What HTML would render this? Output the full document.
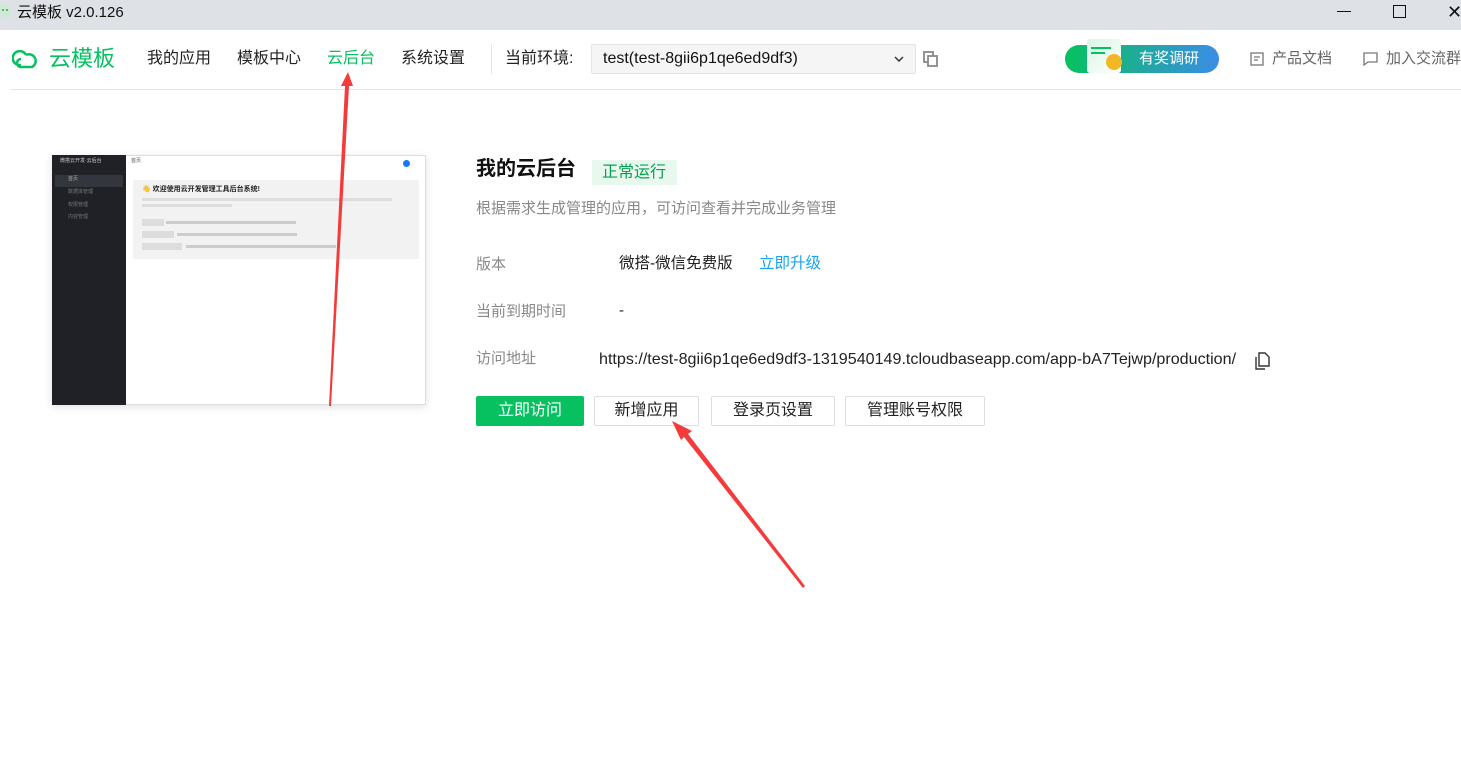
<!DOCTYPE html>
<html><head><meta charset="utf-8"><style>
*{margin:0;padding:0;box-sizing:border-box}
body{width:1461px;height:769px;background:#fff;font-family:"Liberation Sans","Noto Sans CJK SC",sans-serif;position:relative;overflow:hidden;color:#222}
.abs{position:absolute;white-space:nowrap;line-height:1.45}
.tb{position:absolute;left:0;top:0;width:1461px;height:30px;background:#dee1e6}
.nav{font-size:16px;top:47px}
.btn{position:absolute;top:396px;height:30px;border:1px solid #ddd;border-radius:2px;font-size:16px;text-align:center;line-height:28px;color:#222;background:#fff}
.lbl{font-size:15px;color:#888}
</style></head><body>
<div class="tb"></div>
<svg class="abs" style="left:0;top:3px" width="12" height="16"><circle cx="4" cy="8" r="7" fill="#cfe8d8"/><circle cx="3" cy="7" r="1" fill="#3a3"/><circle cx="7" cy="7" r="1" fill="#3a3"/></svg>
<div class="abs" style="left:17px;top:2px;font-size:15px;color:#111">云模板 v2.0.126</div>
<div class="abs" style="left:1337px;top:11px;width:14px;height:1px;background:#111"></div>
<div class="abs" style="left:1393px;top:5px;width:13px;height:13px;border:1px solid #111"></div>
<div class="abs" style="left:1447px;top:-1px;font-size:18px;color:#111">✕</div>

<svg class="abs" style="left:12px;top:47px" width="28" height="24" viewBox="0 0 28 24"><path d="M9 18 A7 7 0 1 1 14 8 M14 8 A6 6 0 1 1 20 20 L9 20 A4 4 0 0 1 9 12" fill="none" stroke="#07c160" stroke-width="2.5"/></svg>
<div class="abs" style="left:49px;top:43px;font-size:22px;color:#07c160">云模板</div>
<div class="abs nav" style="left:147px">我的应用</div>
<div class="abs nav" style="left:237px">模板中心</div>
<div class="abs nav" style="left:327px;color:#07c160">云后台</div>
<div class="abs nav" style="left:401px">系统设置</div>
<div class="abs" style="left:491px;top:44px;width:1px;height:30px;background:#e5e5e5"></div>
<div class="abs nav" style="left:505px">当前环境:</div>
<div class="abs" style="left:591px;top:44px;width:325px;height:30px;background:#f5f5f5;border:1px solid #e3e3e3;border-radius:2px"></div>
<div class="abs" style="left:603px;top:47px;font-size:16px;color:#111">test(test-8gii6p1qe6ed9df3)</div>
<svg class="abs" style="left:893px;top:54px" width="12" height="10"><path d="M2 3 L6 7 L10 3" fill="none" stroke="#333" stroke-width="1.5"/></svg>
<svg class="abs" style="left:923px;top:51px" width="15" height="16"><rect x="1" y="1" width="9" height="10" fill="none" stroke="#888" stroke-width="1.8"/><rect x="5" y="5" width="9" height="10" fill="#fff" stroke="#888" stroke-width="1.8"/></svg>

<div class="abs" style="left:1065px;top:45px;width:154px;height:28px;border-radius:14px;background:linear-gradient(90deg,#07c160 0%,#19b08a 35%,#3b8de6 100%)"></div>
<div class="abs" style="left:1087px;top:39px;width:34px;height:34px;background:linear-gradient(135deg,#d8f5e4,#fff);border-radius:3px"></div>
<div class="abs" style="left:1091px;top:47px;width:20px;height:2px;background:#07c160"></div>
<div class="abs" style="left:1091px;top:52px;width:14px;height:2px;background:#07c160"></div>
<div class="abs" style="left:1106px;top:54px;width:16px;height:16px;border-radius:50%;background:#f2b824"></div>
<div class="abs" style="left:1139px;top:48px;font-size:15px;color:#fff">有奖调研</div>
<svg class="abs" style="left:1250px;top:52px" width="14" height="14"><rect x="1" y="1" width="12" height="12" fill="none" stroke="#777" stroke-width="1.3"/><path d="M4 5h6M4 8h4" stroke="#777" stroke-width="1.3"/></svg>
<div class="abs" style="left:1272px;top:48px;font-size:15px;color:#666">产品文档</div>
<svg class="abs" style="left:1363px;top:52px" width="15" height="14"><path d="M1 1h13v9H5l-4 3z" fill="none" stroke="#777" stroke-width="1.3"/></svg>
<div class="abs" style="left:1386px;top:48px;font-size:15px;color:#666">加入交流群</div>
<div class="abs" style="left:10px;top:89px;width:1451px;height:1px;background:#e6e6e6"></div>

<!-- thumbnail -->
<div class="abs" style="left:52px;top:155px;width:374px;height:250px;border:1px solid #ddd;box-shadow:0 2px 8px rgba(0,0,0,.12);background:#fff"></div>
<div class="abs" style="left:52px;top:155px;width:74px;height:250px;background:#1f2126"></div>
<div class="abs" style="left:60px;top:158px;font-size:5px;color:#ccc">微搭云开发·云后台</div>
<div class="abs" style="left:55px;top:175px;width:68px;height:12px;background:#33363c"></div>
<div class="abs" style="left:68px;top:176px;font-size:5px;color:#aaa">首页</div>
<div class="abs" style="left:68px;top:189px;font-size:5px;color:#777">数据库管理</div>
<div class="abs" style="left:68px;top:202px;font-size:5px;color:#777">权限管理</div>
<div class="abs" style="left:68px;top:214px;font-size:5px;color:#777">内容管理</div>
<div class="abs" style="left:131px;top:158px;font-size:5px;color:#555">首页</div>
<div class="abs" style="left:403px;top:160px;width:7px;height:7px;border-radius:50%;background:#1677ff"></div>
<div class="abs" style="left:133px;top:180px;width:286px;height:79px;background:#f2f2f2"></div>
<div class="abs" style="left:142px;top:185px;font-size:7px;color:#222;font-weight:bold">👋 欢迎使用云开发管理工具后台系统!</div>
<div class="abs" style="left:142px;top:198px;width:250px;height:3px;background:#ddd"></div>
<div class="abs" style="left:142px;top:204px;width:90px;height:3px;background:#ddd"></div>
<div class="abs" style="left:142px;top:219px;width:22px;height:7px;background:#ddd"></div>
<div class="abs" style="left:166px;top:221px;width:130px;height:3px;background:#ccc"></div>
<div class="abs" style="left:142px;top:231px;width:32px;height:7px;background:#ddd"></div>
<div class="abs" style="left:177px;top:233px;width:120px;height:3px;background:#ccc"></div>
<div class="abs" style="left:142px;top:243px;width:40px;height:7px;background:#ddd"></div>
<div class="abs" style="left:186px;top:245px;width:150px;height:3px;background:#ccc"></div>

<!-- content -->
<div class="abs" style="left:476px;top:155px;font-size:20px;font-weight:bold;color:#111">我的云后台</div>
<div class="abs" style="left:592px;top:160px;width:85px;height:25px;background:#e8f8ee"></div>
<div class="abs" style="left:602px;top:161px;font-size:16px;color:#07a050">正常运行</div>
<div class="abs" style="left:476px;top:198px;font-size:15px;color:#888">根据需求生成管理的应用，可访问查看并完成业务管理</div>
<div class="abs lbl" style="left:476px;top:254px">版本</div>
<div class="abs" style="left:619px;top:253px;font-size:15.5px;color:#222">微搭-微信免费版</div>
<div class="abs" style="left:759px;top:253px;font-size:15.5px;color:#1aa1ef">立即升级</div>
<div class="abs lbl" style="left:476px;top:301px">当前到期时间</div>
<div class="abs" style="left:619px;top:300px;font-size:15px">-</div>
<div class="abs lbl" style="left:476px;top:348px">访问地址</div>
<div class="abs" style="left:599px;top:348px;font-size:16.1px;color:#222">https://test-8gii6p1qe6ed9df3-1319540149.tcloudbaseapp.com/app-bA7Tejwp/production/</div>
<svg class="abs" style="left:1254px;top:352px" width="16" height="18"><path d="M5 1h6l4 4v9H5z" fill="none" stroke="#333" stroke-width="1.4"/><path d="M2 5v12h9" fill="none" stroke="#333" stroke-width="1.4"/></svg>
<div class="btn" style="left:476px;width:108px;background:#07c160;border-color:#07c160;color:#fff">立即访问</div>
<div class="btn" style="left:594px;width:105px">新增应用</div>
<div class="btn" style="left:711px;width:124px">登录页设置</div>
<div class="btn" style="left:845px;width:140px">管理账号权限</div>

<svg class="abs" style="left:0;top:0" width="1461" height="769">
<polygon points="329,406 331,406 349,86 353,86 348,72 341,86 345,86" fill="#f43b3b"/>
<polygon points="803,588 805,586 688,434 692,431 672,421 681,440 684,437" fill="#f43b3b"/>
</svg>
</body></html>
